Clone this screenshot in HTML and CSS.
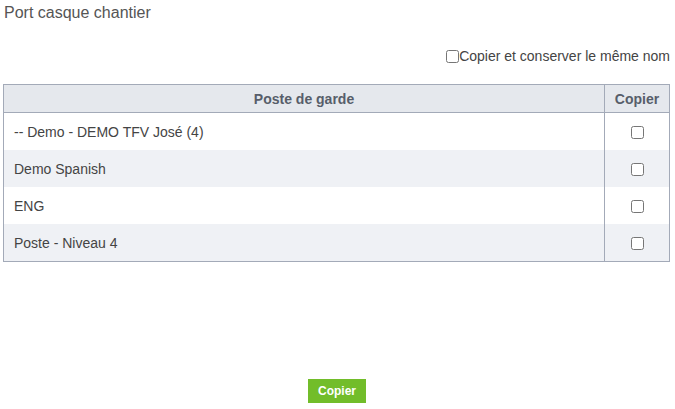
FILE: index.html
```html
<!DOCTYPE html>
<html lang="fr">
<head>
    <meta charset="UTF-8">
    <title>Port casque chantier</title>
    <link rel="stylesheet" href="styles.css">
</head>
<body>

<div class="page">
    <h1 class="page-title">Port casque chantier</h1>

    <div class="keep-name">
        <label><input type="checkbox" class="small-check">Copier et conserver le même nom</label>
    </div>

    <table class="copy-table">
        <thead>
        <tr>
            <th class="col-name">Poste de garde</th>
            <th class="col-copy">Copier</th>
        </tr>
        </thead>
        <tbody>
        <tr>
            <td>-- Demo - DEMO TFV José (4)</td>
            <td class="cell-check"><input type="checkbox"></td>
        </tr>
        <tr>
            <td>Demo Spanish</td>
            <td class="cell-check"><input type="checkbox"></td>
        </tr>
        <tr>
            <td>ENG</td>
            <td class="cell-check"><input type="checkbox"></td>
        </tr>
        <tr>
            <td>Poste - Niveau 4</td>
            <td class="cell-check"><input type="checkbox"></td>
        </tr>
        </tbody>
    </table>

    <div class="actions">
        <button type="button" class="btn-copy">Copier</button>
    </div>
</div>

</body>
</html>
```

FILE: styles.css
```css
* {
    margin: 0;
    font-family: Arial, "Liberation Sans", sans-serif;
}

body {
    background-color: white;
    color: #444;
}

.page {
    padding: 3px 5px 0 3px;
    height: 400px;
    display: flex;
    flex-direction: column;
}

.page-title {
    font-size: 16px;
    font-weight: normal;
    color: #555;
    padding-left: 1px;
    line-height: 19px;
}

.keep-name {
    display: flex;
    justify-content: flex-end;
    margin-top: 26px;
    font-size: 14px;
    color: #444;
}

.keep-name label {
    display: flex;
    align-items: center;
}

.small-check {
    width: 13px;
    height: 13px;
    margin: 0;
}

.copy-table {
    margin-top: 20px;
    width: 100%;
    border-collapse: collapse;
    border: 1px solid #a3aab8;
    font-size: 14px;
}

.copy-table th {
    background-color: #e5e8ed;
    color: #575e6a;
    height: 27px;
    padding: 0;
    border-bottom: 1px solid #a3aab8;
}

.copy-table td {
    height: 37px;
    padding: 0 0 0 10px;
    color: #444;
}

.copy-table tbody tr:nth-child(even) td {
    background-color: #eff1f5;
}

.col-copy,
.cell-check {
    width: 64px;
    border-left: 1px solid #a3aab8;
    text-align: center;
}

.copy-table td.cell-check {
    padding: 0;
}

.cell-check input {
    width: 13px;
    height: 13px;
    margin: 4px 0 0 0;
}

.actions {
    margin-top: auto;
    display: flex;
    justify-content: center;
}

.btn-copy {
    background-color: #72bd2a;
    border: none;
    color: white;
    font-size: 12px;
    font-weight: bold;
    padding: 0 10px;
    height: 24px;
    border-radius: 0;
    margin-left: 1px;
}
```
